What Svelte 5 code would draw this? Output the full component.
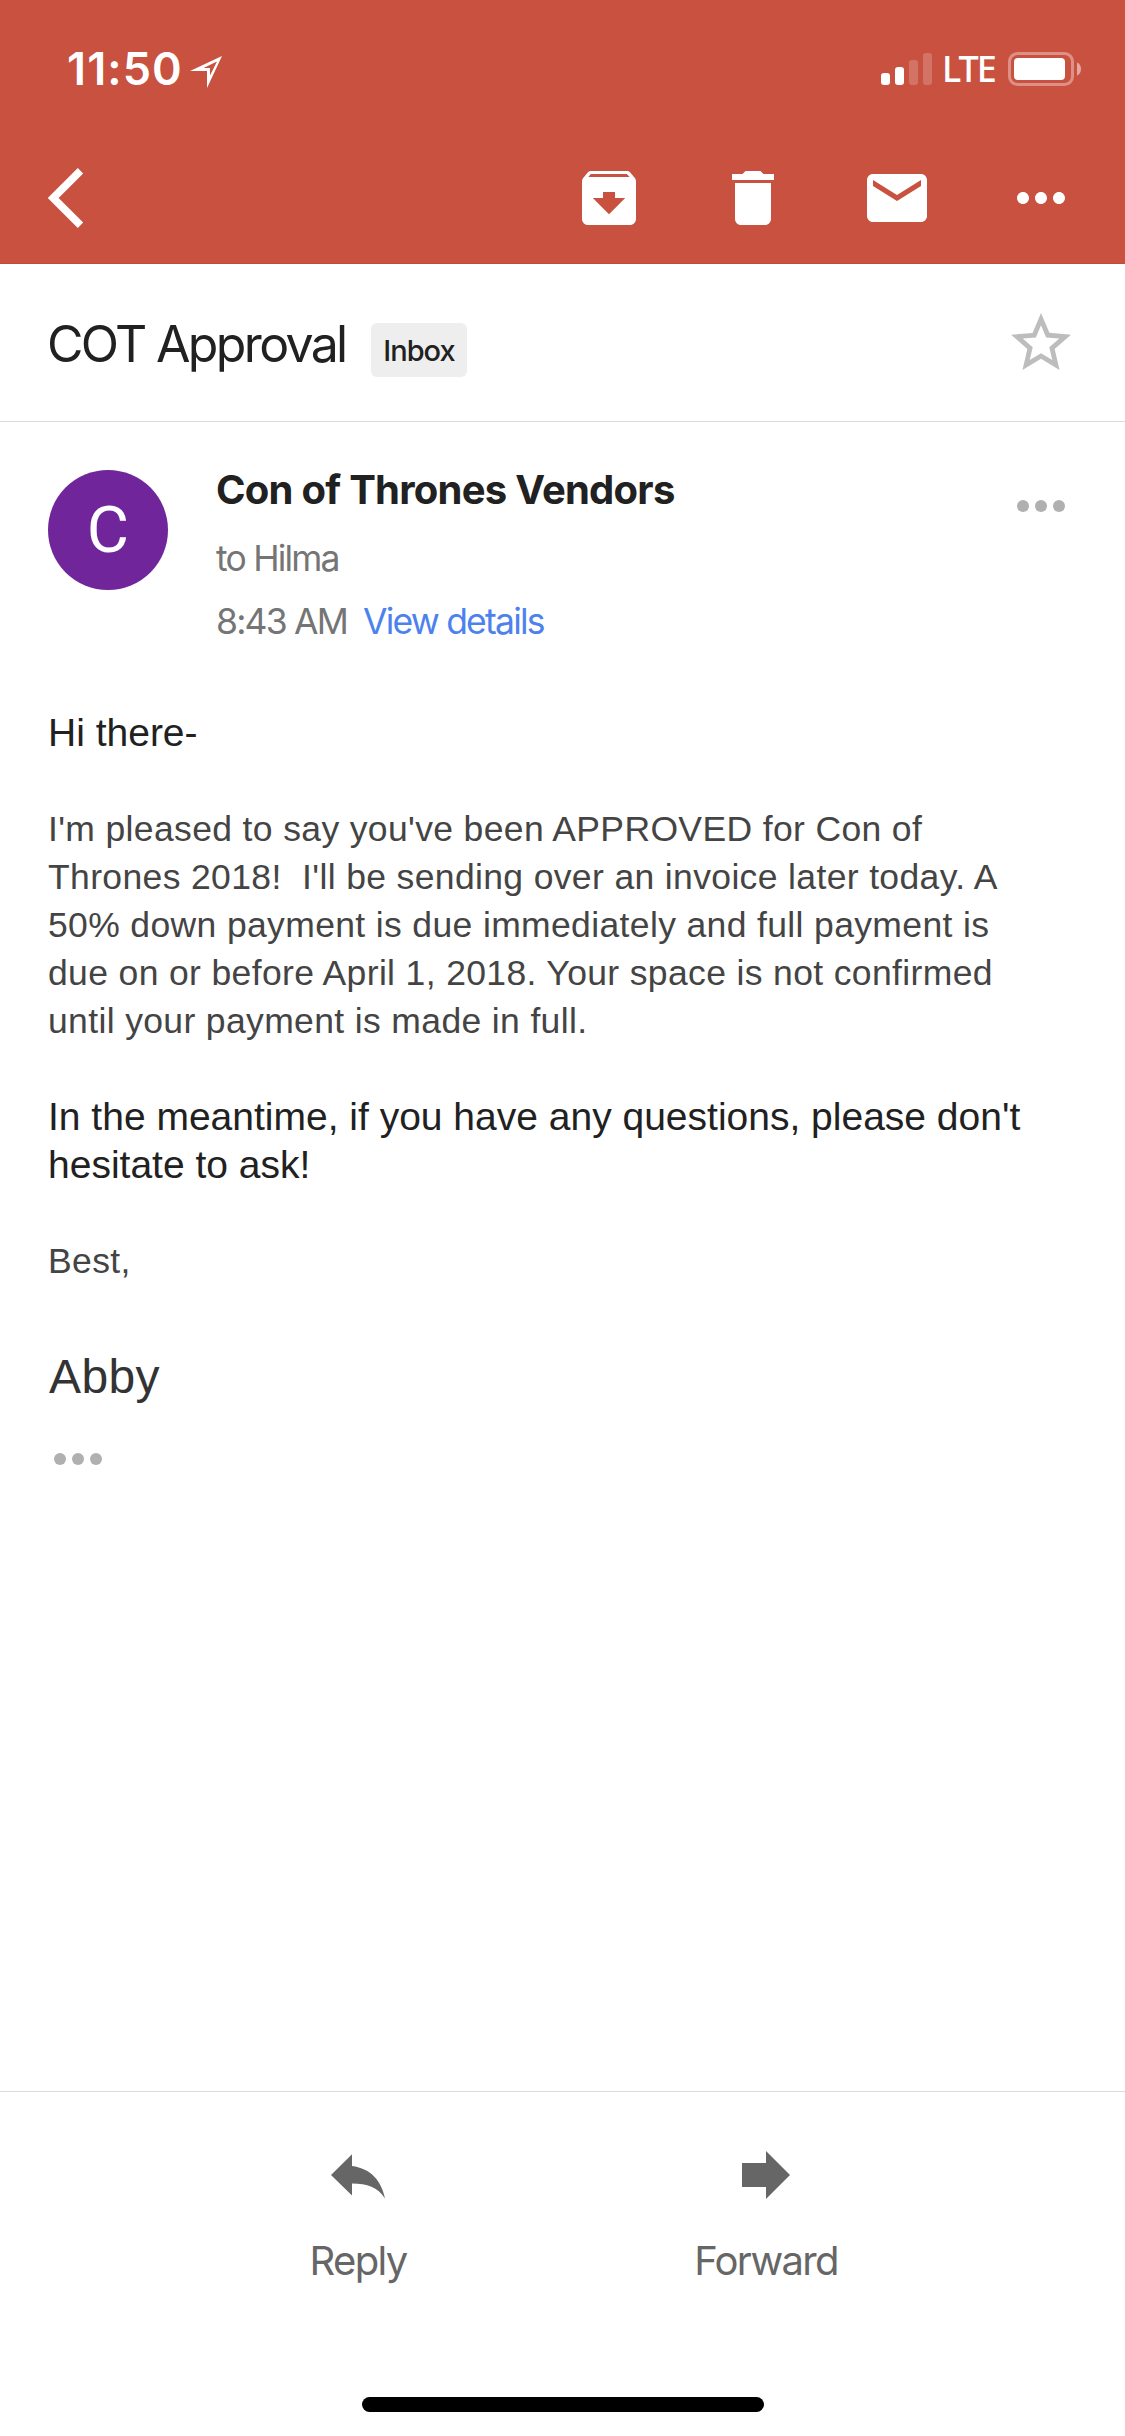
<script lang="ts">
  type Signal = { height: number; on: boolean }

  const signal: Signal[] = [
    { height: 12, on: true },
    { height: 18, on: true },
    { height: 25, on: false },
    { height: 32, on: false },
  ]

  const actions = [
    {
      label: 'Archive',
      path: 'M20.54 5.23l-1.39-1.68C18.88 3.21 18.47 3 18 3H6c-.47 0-.88.21-1.16.55L3.46 5.23C3.17 5.57 3 6.02 3 6.5V19c0 1.1.9 2 2 2h14c1.1 0 2-.9 2-2V6.5c0-.48-.17-.93-.46-1.27zM12 17.4L6.6 12H10v-2h4v2h3.4L12 17.4zM5.12 5l.81-1h12l.94 1H5.12z',
    },
    {
      label: 'Delete',
      path: 'M6 19c0 1.1.9 2 2 2h8c1.1 0 2-.9 2-2V7H6v12zM19 4h-3.5l-1-1h-5l-1 1H5v2h14V4z',
    },
    {
      label: 'Mark unread',
      path: 'M20 4H4c-1.1 0-2 .9-2 2v12c0 1.1.9 2 2 2h16c1.1 0 2-.9 2-2V6c0-1.1-.9-2-2-2zm0 4l-8 5-8-5V6l8 5 8-5v2z',
    },
    {
      label: 'More',
      path: 'M6 10c-1.1 0-2 .9-2 2s.9 2 2 2 2-.9 2-2-.9-2-2-2zm12 0c-1.1 0-2 .9-2 2s.9 2 2 2 2-.9 2-2-.9-2-2-2zm-6 0c-1.1 0-2 .9-2 2s.9 2 2 2 2-.9 2-2-.9-2-2-2z',
    },
  ]
</script>

{#snippet dots()}
  <svg class="dots" viewBox="0 0 48 12" aria-hidden="true">
    <circle cx="6" cy="6" r="6" />
    <circle cx="24" cy="6" r="6" />
    <circle cx="42" cy="6" r="6" />
  </svg>
{/snippet}

<div class="screen">
  <header>
    <div class="status">
      <span class="clock">11:50</span>
      <svg class="location" viewBox="0 0 32 32" aria-hidden="true">
        <path fill-rule="evenodd" d="M32 0 17 32V15H0zM27 5.4 13.5 12H20v7.6z" />
      </svg>
      <div class="signal">
        {#each signal as bar}
          <span class="bar" class:on={bar.on} style="height: {bar.height}px"></span>
        {/each}
      </div>
      <span class="carrier">LTE</span>
      <svg class="battery" viewBox="0 0 74 34" aria-hidden="true">
        <rect class="shell" x="1.5" y="1.5" width="63" height="31" rx="8" />
        <rect x="6" y="6" width="51" height="22" rx="4" />
        <path class="nub" d="M69 10.5c2.6 1.2 4 3.6 4 6.5s-1.4 5.3-4 6.5z" />
      </svg>
    </div>

    <div class="toolbar">
      <button class="back" aria-label="Back">
        <svg viewBox="0 0 36 60"><path d="M32.5 2.7 5.2 30l27.3 27.3" /></svg>
      </button>
      {#each actions as a (a.label)}
        <button aria-label={a.label}>
          <svg class="icon" viewBox="0 0 24 24"><path d={a.path} /></svg>
        </button>
      {/each}
    </div>
  </header>

  <section class="subject">
    <h1>COT Approval</h1>
    <span class="chip">Inbox</span>
    <button class="star" aria-label="Star">
      <svg class="icon" viewBox="0 0 24 24">
        <path d="M22 9.24l-7.19-.62L12 2 9.19 8.63 2 9.24l5.46 4.73L5.82 21 12 17.27 18.18 21l-1.63-7.03L22 9.24zM12 15.4l-3.76 2.27 1-4.28-3.32-2.88 4.38-.38L12 6.1l1.71 4.04 4.38.38-3.32 2.88 1 4.28L12 15.4z" />
      </svg>
    </button>
  </section>

  <section class="sender">
    <div class="avatar">C</div>
    <div class="meta">
      <h2>Con of Thrones Vendors</h2>
      <p class="to">to Hilma</p>
      <p class="when"><span>8:43 AM</span><a href="#details">View details</a></p>
    </div>
    <button class="more" aria-label="Message options">{@render dots()}</button>
  </section>

  <article>
    <p class="strong">Hi there-</p>
    <p>
      I'm pleased to say you've been APPROVED for Con of Thrones 2018!&nbsp; I'll be sending over an
      invoice later today. A 50% down payment is due immediately and full payment is due on or before
      April 1, 2018. Your space is not confirmed until your payment is made in full.
    </p>
    <p class="strong">In the meantime, if you have any questions, please don't hesitate to ask!</p>
    <p>Best,</p>
    <p class="signature">Abby</p>
    <button class="quoted" aria-label="Show quoted text">{@render dots()}</button>
  </article>

  <footer>
    <div class="replies">
      <button>
        <svg viewBox="0 0 54 48">
          <path d="M0 24 21 3.3V15c19 2.5 29.5 15 33 32.5C46.5 36 36.5 32.5 21 32.5v12z" />
        </svg>
        <span>Reply</span>
      </button>
      <button>
        <svg viewBox="0 0 48 48"><path d="M0 12h24V0l24 24-24 24V36H0z" /></svg>
        <span>Forward</span>
      </button>
    </div>
    <div class="home"></div>
  </footer>
</div>

<style>
  :global(body) {
    margin: 0;
    background: #fff;
  }

  .screen {
    display: flex;
    flex-direction: column;
    width: 1125px;
    height: 2436px;
    overflow: hidden;
    background: #fff;
    color: #212121;
    font-family: Inter, "Liberation Sans", sans-serif;
  }

  h1, h2, p { margin: 0; }
  svg { display: block; }

  button {
    display: block;
    padding: 0;
    border: 0;
    background: none;
    color: inherit;
    font: inherit;
  }

  .icon {
    width: 72px;
    height: 72px;
    fill: currentColor;
  }

  /* Header: status bar over the action bar */
  header {
    height: 264px;
    box-sizing: border-box;
    border-bottom: 1px solid #c24a3a;
    background: #c95140;
    color: #fff;
  }

  .status {
    display: flex;
    align-items: center;
    height: 132px;
    padding: 6px 43px 0 67px;
    box-sizing: border-box;
  }
  .clock {
    width: 123px;
    font-size: 45px;
    font-weight: 600;
    line-height: 54px;
    letter-spacing: 1.1px;
    white-space: nowrap;
  }
  .location {
    width: 32px;
    height: 32px;
    margin-top: 6px;
    fill: #fff;
  }
  .signal {
    display: flex;
    align-items: flex-end;
    gap: 5px;
    margin-left: auto;
  }
  .bar {
    width: 9px;
    border-radius: 3px;
    background: rgba(255, 255, 255, 0.2);
  }
  .bar.on { background: #fff; }
  .carrier {
    width: 66px;
    margin-left: 10px;
    font-family: "Noto Sans", sans-serif;
    font-size: 36px;
    font-weight: 500;
    line-height: 42px;
    letter-spacing: -2px;
  }
  .battery {
    width: 74px;
    height: 34px;
    fill: #fff;
  }
  .shell {
    fill: none;
    stroke: #fff;
    stroke-width: 3;
    opacity: 0.37;
  }
  .nub { opacity: 0.5; }

  .toolbar {
    display: flex;
    align-items: center;
    gap: 72px;
    height: 132px;
    padding: 0 48px;
  }
  .back { margin-right: auto; }
  .back svg {
    width: 36px;
    height: 60px;
    fill: none;
    stroke: #fff;
    stroke-width: 7.6;
  }

  /* Subject line */
  .subject {
    display: flex;
    height: 158px;
    box-sizing: border-box;
    padding: 0 48px 0 47px;
    border-bottom: 1px solid #dcdcdc;
  }
  h1 {
    width: 298px;
    margin-top: 50px;
    font-size: 50px;
    font-weight: 400;
    line-height: 60px;
    letter-spacing: -2.65px;
    white-space: nowrap;
  }
  .chip {
    width: 96px;
    height: 54px;
    margin: 59px 0 0 26px;
    border-radius: 6px;
    background: #eee;
    font-size: 29px;
    font-weight: 500;
    line-height: 55px;
    letter-spacing: -1px;
    text-align: center;
  }
  .star {
    margin: 43px 0 auto auto;
    color: #bdbdbd;
  }

  /* Sender block */
  .sender {
    display: flex;
    padding: 48px 60px 0 48px;
  }
  .avatar {
    width: 120px;
    height: 120px;
    border-radius: 50%;
    background: #70269a;
    color: #fff;
    font-family: Roboto, sans-serif;
    font-size: 65px;
    line-height: 120px;
    text-align: center;
  }
  .meta {
    flex: 1;
    margin-left: 48px;
    color: #757575;
    font-size: 35.5px;
    letter-spacing: -1.8px;
    white-space: nowrap;
  }
  h2 {
    color: #212121;
    font-size: 40px;
    font-weight: 700;
    line-height: 40px;
    letter-spacing: -0.75px;
  }
  .to {
    margin-top: 25px;
    line-height: 48px;
  }
  .when {
    display: flex;
    gap: 16px;
    margin-top: 15px;
    line-height: 48px;
  }
  a {
    color: #4d82ee;
    text-decoration: none;
  }
  .dots {
    width: 48px;
    height: 12px;
    fill: #b0b0b0;
  }
  .more { margin: 30px 0 auto; }

  /* Message body */
  article {
    flex: 1;
    padding: 63px 87px 0 48px;
    color: #444;
    font-family: "Liberation Sans", Arial, sans-serif;
    font-size: 35.5px;
    line-height: 48px;
    letter-spacing: 0.36px;
  }
  article p { margin-bottom: 48px; }
  article .strong {
    color: #212121;
    font-size: 39px;
    letter-spacing: 0;
  }
  article .signature {
    margin: 68px 0 52px 1px;
    color: #333;
    font-size: 48px;
  }
  .quoted { margin-left: 6px; }

  /* Bottom bar */
  footer {
    height: 345px;
    box-sizing: border-box;
    border-top: 1px solid #dcdcdc;
    color: #666;
  }
  .replies {
    display: flex;
    justify-content: center;
    height: 305px;
    padding-right: 1px;
  }
  .replies button {
    display: flex;
    flex-direction: column;
    align-items: center;
    width: 408px;
    padding-top: 59px;
    font-size: 40px;
    line-height: 48px;
    letter-spacing: -1.7px;
  }
  .replies svg {
    height: 48px;
    margin-bottom: 38px;
    fill: #666;
  }
  .home {
    width: 402px;
    height: 15px;
    margin: 0 auto;
    border-radius: 8px;
    background: #000;
  }
</style>
